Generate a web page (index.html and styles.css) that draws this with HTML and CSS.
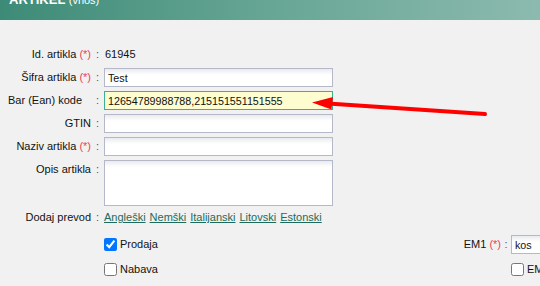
FILE: index.html
```html
<!DOCTYPE html>
<html lang="sl">
<head>
<meta charset="UTF-8">
<meta name="viewport" content="width=device-width, initial-scale=1.0">
<title>Artikel (vnos)</title>
<link rel="stylesheet" href="styles.css">
</head>
<body>

<div class="panel-head">
    <h1>ARTIKEL <span>(vnos)</span></h1>
</div>

<div class="page">
    <form class="article-form">
        <label class="label">Id. artikla <span class="req">(*)</span></label>
        <div class="colon">:</div>
        <div class="value">61945</div>

        <label class="label" for="sifra">Šifra artikla <span class="req">(*)</span></label>
        <div class="colon">:</div>
        <input class="field" type="text" id="sifra" value="Test">

        <label class="label label-bar" for="ean">Bar (Ean) kode</label>
        <div class="colon">:</div>
        <input class="field field-active" type="text" id="ean" value="12654789988788,215151551151555">

        <label class="label" for="gtin">GTIN</label>
        <div class="colon">:</div>
        <input class="field" type="text" id="gtin">

        <label class="label" for="naziv">Naziv artikla <span class="req">(*)</span></label>
        <div class="colon">:</div>
        <input class="field" type="text" id="naziv">

        <label class="label" for="opis">Opis artikla</label>
        <div class="colon">:</div>
        <textarea class="field field-area" id="opis"></textarea>

        <div class="label label-short">Dodaj prevod</div>
        <div class="colon colon-short">:</div>
        <div class="translations">
            <a href="#">Angleški</a>
            <a href="#">Nemški</a>
            <a href="#">Italijanski</a>
            <a href="#">Litovski</a>
            <a href="#">Estonski</a>
        </div>
    </form>

    <div class="options">
        <label class="check check-first"><input type="checkbox" checked> Prodaja</label>
        <label class="label" for="em1">EM1 <span class="req">(*)</span></label>
        <div class="colon">:</div>
        <input class="field field-em" type="text" id="em1" value="kos">

        <label class="check check-first"><input type="checkbox"> Nabava</label>
        <div></div>
        <div></div>
        <label class="check"><input type="checkbox"> EM2</label>
    </div>

    <!-- pointer drawn over the form -->
    <svg class="pointer" width="540" height="286" viewBox="0 0 540 286">
        <line x1="485" y1="114" x2="328" y2="103.5" stroke="#ff0000" stroke-width="4" stroke-linecap="round"/>
        <polygon points="312,102.5 333,97 331.5,109.5" fill="#ff0000"/>
    </svg>
</div>

</body>
</html>
```

FILE: styles.css
```css
/* Base */
* {
    box-sizing: border-box;
}
html, body {
    margin: 0;
    overflow: hidden;
}
body {
    background: #f1f1f1;
    font-family: "Liberation Sans", Arial, sans-serif;
    font-size: 11px;
    color: #111;
}

/* Header bar */
.panel-head {
    height: 20px;
    overflow: hidden;
    background: linear-gradient(90deg, #3d8b77, #67a694 50%, #8cbaaf);
    padding-left: 9px;
}
.panel-head h1 {
    margin: -9px 0 0;
    font-size: 13px;
    line-height: 17px;
    font-weight: bold;
    color: #fff;
}
.panel-head h1 span {
    font-size: 11px;
    font-weight: normal;
}

.page {
    position: relative;
}

/* Main form grid */
.article-form {
    display: grid;
    grid-template-columns: 91px 13px 229px;
    row-gap: 4px;
    padding-top: 25px;
    margin: 0;
}
.label {
    text-align: right;
    line-height: 19px;
    white-space: nowrap;
}
.label-bar {
    padding-right: 9px;
}
.req {
    color: #e8435a;
}
.colon {
    text-align: center;
    line-height: 19px;
    color: #555;
}
.value {
    line-height: 19px;
    padding-left: 1px;
}
.label-short, .colon-short {
    line-height: 15px;
}

.field {
    display: block;
    width: 229px;
    height: 19px;
    margin: 0;
    padding: 0 3px;
    border: 1px solid #b5b8c8;
    background: linear-gradient(#e9ebee, #fff 6px);
    font-family: "Liberation Sans", Arial, sans-serif;
    font-size: 10.7px;
    color: #111;
    outline: none;
}
.field-active {
    border-color: #3cb08f;
    background: #fefdd0;
}
.field-area {
    height: 46px;
    resize: none;
}
.field-em {
    width: 100px;
}

/* Translation links */
.translations {
    display: flex;
    gap: 4px;
    line-height: 15px;
}
.translations a {
    color: #1c6b5c;
    text-decoration: underline;
}

/* Lower options */
.options {
    display: grid;
    grid-template-columns: 444px 57px 10px 100px;
    grid-auto-rows: 19px;
    row-gap: 6px;
    margin-top: 10px;
}
.check {
    display: flex;
    align-items: center;
    gap: 3px;
    line-height: 19px;
}
.check-first {
    padding-left: 104px;
}
.check input {
    width: 13px;
    height: 13px;
    margin: 0;
}

.pointer {
    position: absolute;
    left: 0;
    top: -20px;
    pointer-events: none;
}
```
